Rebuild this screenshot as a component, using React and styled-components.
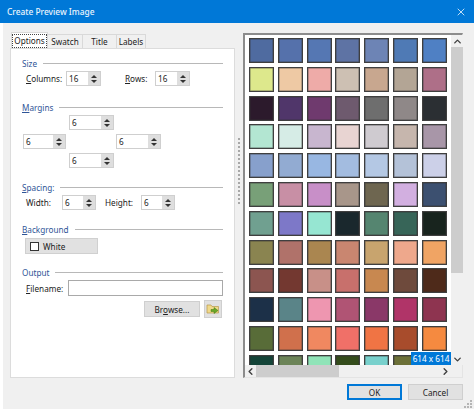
import styled, { createGlobalStyle } from 'styled-components';
import { ChevronUp, ChevronDown, ChevronLeft, ChevronRight, X } from 'lucide-react';

const GlobalStyle = createGlobalStyle`
  html, body {
    margin: 0;
    padding: 0;
    background: #ffffff;
  }
  * {
    box-sizing: border-box;
  }
`;

const Dialog = styled.div`
  width: 474px;
  height: 411px;
  display: flex;
  flex-direction: column;
  overflow: hidden;
  font-family: "Noto Sans", "Open Sans", sans-serif;
  font-size: 8.2px;
  color: #222222;
  background: #ffffff;
`;

const TitleBar = styled.header`
  flex: none;
  height: 23px;
  padding: 0 7px;
  display: flex;
  align-items: center;
  justify-content: space-between;
  background: #0078d7;
  color: #eaf4fc;
  font-size: 8.4px;
  font-weight: 500;
`;

const Body = styled.div`
  height: 386px;
  margin-left: 3px;
  padding: 10px 11px 0 7px;
  display: flex;
  flex-direction: column;
  background: #f0f0f0;
`;

const Content = styled.div`
  height: 345px;
  display: flex;
`;

const LeftPane = styled.div`
  width: 225px;
  display: flex;
  flex-direction: column;
`;

const Tabs = styled.div`
  flex: none;
  height: 15px;
  padding-left: 2px;
  display: flex;
  align-items: flex-end;
`;

const Tab = styled.div`
  width: ${(p) => p.$w}px;
  height: ${(p) => (p.$active ? 16 : 14)}px;
  display: flex;
  align-items: center;
  justify-content: center;
  background: ${(p) => (p.$active ? '#ffffff' : '#f0f0f0')};
  border: 1px solid #d9d9d9;
  border-bottom: none;
  margin-left: -1px;
  position: relative;
  z-index: ${(p) => (p.$active ? 1 : 0)};
`;

const FocusText = styled.span`
  padding: 0 1px;
  line-height: 12px;
  outline: 1px dotted #444444;
`;

const Panel = styled.div`
  flex: 1;
  padding: 7px 11px 0 11px;
  background: #ffffff;
  border: 1px solid #dcdcdc;
  display: flex;
  flex-direction: column;
`;

const Section = styled.section`
  margin-bottom: ${(p) => p.$gap}px;
  display: flex;
  flex-direction: column;
`;

const Legend = styled.div`
  height: 14px;
  margin-bottom: ${(p) => p.$gap ?? 1}px;
  display: flex;
  align-items: center;
  gap: 6px;
  color: #2f5597;
  &::after {
    content: '';
    flex: 1;
    height: 1px;
    background: #b8b8b8;
  }
`;

const Key = styled.span`
  text-decoration: underline;
`;

const FieldRow = styled.div`
  padding-left: 4px;
  display: flex;
  align-items: center;
`;

const Label = styled.label`
  width: ${(p) => p.$w}px;
  padding-left: ${(p) => p.$indent ?? 0}px;
  flex: none;
`;

const SpinBox = styled.div`
  width: ${(p) => p.$w}px;
  height: 15px;
  display: flex;
  justify-content: space-between;
  background: #ffffff;
  border: 1px solid #cfcfcf;
  line-height: 13px;
  padding-left: 2px;
`;

const SpinButtons = styled.div`
  width: 12px;
  display: flex;
  flex-direction: column;
  justify-content: center;
  align-items: center;
  gap: 2px;
  background: #dedede;
`;

const Arrow = styled.span`
  width: 0;
  height: 0;
  border-left: 3px solid transparent;
  border-right: 3px solid transparent;
  ${(p) => (p.$down ? 'border-top: 3px solid #333333;' : 'border-bottom: 3px solid #333333;')}
`;

const MarginsGrid = styled.div`
  padding-left: 1px;
  display: grid;
  grid-template-columns: 46px 47px 45px;
  row-gap: 4px;
  justify-items: start;
`;

const ColorButton = styled.div`
  width: 73px;
  height: 16px;
  margin-left: 3px;
  padding-left: 4px;
  display: flex;
  align-items: center;
  gap: 4px;
  background: #e1e1e1;
  border: 1px solid #d0d0d0;
`;

const ColorChip = styled.span`
  width: 9px;
  height: 9px;
  background: ${(p) => p.$color};
  border: 1px solid #333333;
`;

const TextInput = styled.div`
  width: 156px;
  height: 16px;
  background: #ffffff;
  border: 1px solid #a9a9a9;
`;

const ButtonRow = styled.div`
  margin-top: 4px;
  padding-right: 1px;
  display: flex;
  justify-content: flex-end;
  align-items: center;
  gap: 4px;
`;

const Button = styled.div`
  width: ${(p) => p.$w}px;
  height: ${(p) => p.$h ?? 16}px;
  display: flex;
  align-items: center;
  justify-content: center;
  background: #e1e1e1;
  border: ${(p) => (p.$primary ? '2px solid #0078d7' : '1px solid #cfcfcf')};
`;

const Splitter = styled.div`
  width: 8px;
  flex: none;
  display: flex;
  align-items: center;
  justify-content: center;
  padding-bottom: 69px;
  &::before {
    content: '';
    height: 66px;
    border-left: 2px dotted #a8a8a8;
  }
`;

const PreviewFrame = styled.div`
  width: 220px;
  display: grid;
  grid-template-columns: 206px 12px;
  grid-template-rows: 1fr 12px;
  border-top: 2px solid #8c8c8c;
  border-left: 2px solid #8c8c8c;
  border-right: 1px solid #e4e4e4;
  border-bottom: 1px solid #e4e4e4;
`;

const SwatchView = styled.div`
  position: relative;
  overflow: hidden;
  background: #ffffff;
  padding: 3px 0 0 4px;
`;

const SwatchGrid = styled.div`
  display: grid;
  grid-template-columns: repeat(7, 25px);
  grid-auto-rows: 25px;
  gap: 3.8px;
`;

const Swatch = styled.div`
  background: ${(p) => p.$color};
  border: 1px solid #3f3f3f;
  box-shadow: inset 0 0 0 0.5px rgba(50, 50, 50, 0.6);
`;

const SizeBadge = styled.div`
  position: absolute;
  right: 0;
  bottom: 0;
  width: 40px;
  height: 13px;
  display: flex;
  align-items: center;
  justify-content: center;
  background: #0078d7;
  color: #ffffff;
  font-size: 8.2px;
  line-height: 13px;
  white-space: nowrap;
`;

const VScroll = styled.div`
  display: flex;
  flex-direction: column;
  background: #f0f0f0;
`;

const HScroll = styled.div`
  display: flex;
  background: #f0f0f0;
`;

const ScrollEnd = styled.div`
  flex: none;
  ${(p) => (p.$horizontal ? 'width: 11px;' : 'height: 12px;')}
  display: flex;
  align-items: center;
  justify-content: center;
  color: #404040;
`;

const Thumb = styled.div`
  flex: none;
  ${(p) => (p.$horizontal ? `width: ${p.$size}px;` : `height: ${p.$size}px;`)}
  background: #cdcdcd;
`;

const Spacer = styled.div`
  flex: 1;
`;

const Footer = styled.footer`
  margin-top: 6px;
  display: flex;
  justify-content: flex-end;
  align-items: flex-end;
  gap: 6px;
  height: 16px;
`;

const Grip = styled.svg`
  position: absolute;
  right: 1px;
  bottom: 2px;
`;

const Spin = ({ value, w }) => (
  <SpinBox $w={w}>
    {value}
    <SpinButtons>
      <Arrow />
      <Arrow $down />
    </SpinButtons>
  </SpinBox>
);

const FolderIcon = () => (
  <svg width="14" height="14" viewBox="0 0 14 14">
    <path d="M1 3h4l1 1.5h6.5V11H1z" fill="#f0d98a" stroke="#b89a4a" strokeWidth="0.7" />
    <path d="M5 7.5h3V5.5l4 3-4 3v-2H5z" fill="#6aa828" stroke="#3f7a12" strokeWidth="0.5" />
  </svg>
);

const swatches = [
  '#4f6ba0', '#5571ab', '#5577b3', '#5e73a4', '#6d84b5', '#4f7ab5', '#4f80c4',
  '#dde88c', '#eec9a4', '#eeaba8', '#cdc0b3', '#c8a78f', '#b3a595', '#ae6f88',
  '#2c1a2c', '#50366a', '#6f3a6e', '#6e5a6e', '#6e6e6e', '#8f8888', '#2b2f33',
  '#b3e6d2', '#d6ece6', '#c8b6cf', '#e8d4d2', '#cfcbd0', '#c6b6ad', '#a896a8',
  '#87a0cc', '#92abd2', '#98b7e2', '#a3bce0', '#b4c8e4', '#b4c2d8', '#ccd0e8',
  '#78a078', '#c88fa5', '#c88fc8', '#a8968a', '#6e6650', '#d2afe0', '#3c5070',
  '#70a090', '#7d78c8', '#96e6d2', '#1a282d', '#558570', '#376558', '#18241e',
  '#8a8450', '#b0726a', '#aa8650', '#c98670', '#c8a46e', '#eea88c', '#f0a464',
  '#8c5550', '#733830', '#c89088', '#c8706c', '#c88850', '#6e4a3c', '#4e2a1a',
  '#1c3048', '#5a8488', '#ee96b0', '#b05474', '#8a3868', '#b03468', '#8e3450',
  '#586c38', '#d0704c', '#f08860', '#f07068', '#f07444', '#a84c2c', '#f58a40',
  '#144438', '#6c8458', '#90e4b8', '#344c1c', '#78d0cc', '#6c7038', '#8a6a3c',
];

const tabs = [
  { label: 'Swatch', w: 36 },
  { label: 'Title', w: 35 },
  { label: 'Labels', w: 30 },
];

export default function App() {
  return (
    <>
      <GlobalStyle />
      <Dialog>
        <TitleBar>
          Create Preview Image
          <X size={12} strokeWidth={1.5} color="#ffffff" />
        </TitleBar>
        <Body>
          <Content>
            <LeftPane>
              <Tabs>
                <Tab $active $w={37}>
                  <FocusText>Options</FocusText>
                </Tab>
                {tabs.map((t) => (
                  <Tab key={t.label} $w={t.w}>
                    {t.label}
                  </Tab>
                ))}
              </Tabs>
              <Panel>
                <Section $gap={14}>
                  <Legend>Size</Legend>
                  <FieldRow>
                    <Label $w={40}>
                      <Key>C</Key>olumns:
                    </Label>
                    <Spin value="16" w={35} />
                    <Label $w={54} $indent={24}>
                      <Key>R</Key>ows:
                    </Label>
                    <Spin value="16" w={35} />
                  </FieldRow>
                </Section>
                <Section $gap={12}>
                  <Legend>
                    <span>
                      <Key>M</Key>argins
                    </span>
                  </Legend>
                  <MarginsGrid>
                    <span />
                    <Spin value="6" w={45} />
                    <span />
                    <Spin value="6" w={43} />
                    <span />
                    <Spin value="6" w={45} />
                    <span />
                    <Spin value="6" w={45} />
                    <span />
                  </MarginsGrid>
                </Section>
                <Section $gap={12}>
                  <Legend>
                    <span>
                      <Key>S</Key>pacing:
                    </span>
                  </Legend>
                  <FieldRow>
                    <Label $w={36}>Width:</Label>
                    <Spin value="6" w={34} />
                    <Label $w={45} $indent={9}>
                      Height:
                    </Label>
                    <Spin value="6" w={34} />
                  </FieldRow>
                </Section>
                <Section $gap={11}>
                  <Legend $gap={2}>
                    <span>
                      <Key>B</Key>ackground
                    </span>
                  </Legend>
                  <ColorButton>
                    <ColorChip $color="#ffffff" />
                    White
                  </ColorButton>
                </Section>
                <Section $gap={0}>
                  <Legend>Output</Legend>
                  <FieldRow>
                    <Label $w={42}>
                      <Key>F</Key>ilename:
                    </Label>
                    <TextInput />
                  </FieldRow>
                  <ButtonRow>
                    <Button $w={56}>
                      <span>
                        Br<Key>o</Key>wse...
                      </span>
                    </Button>
                    <Button $w={18} $h={18}>
                      <FolderIcon />
                    </Button>
                  </ButtonRow>
                </Section>
              </Panel>
            </LeftPane>
            <Splitter />
            <PreviewFrame>
              <SwatchView>
                <SwatchGrid>
                  {swatches.map((c, i) => (
                    <Swatch key={i} $color={c} />
                  ))}
                </SwatchGrid>
                <SizeBadge>614 x 614</SizeBadge>
              </SwatchView>
              <VScroll>
                <ScrollEnd>
                  <ChevronUp size={11} strokeWidth={3} />
                </ScrollEnd>
                <Thumb $size={226} />
                <Spacer />
                <ScrollEnd>
                  <ChevronDown size={11} strokeWidth={3} />
                </ScrollEnd>
              </VScroll>
              <HScroll>
                <ScrollEnd $horizontal>
                  <ChevronLeft size={11} strokeWidth={3} />
                </ScrollEnd>
                <Thumb $horizontal $size={83} />
                <Spacer />
                <ScrollEnd $horizontal>
                  <ChevronRight size={11} strokeWidth={3} />
                </ScrollEnd>
              </HScroll>
              <Spacer />
            </PreviewFrame>
          </Content>
          <Footer>
            <Button $w={55} $primary>
              OK
            </Button>
            <Button $w={55}>Cancel</Button>
          </Footer>
          <Grip width="10" height="10" viewBox="0 0 10 10">
            <g fill="#b5b5b5">
              <rect x="7" y="1" width="2" height="2" />
              <rect x="4" y="4" width="2" height="2" />
              <rect x="7" y="4" width="2" height="2" />
              <rect x="1" y="7" width="2" height="2" />
              <rect x="4" y="7" width="2" height="2" />
              <rect x="7" y="7" width="2" height="2" />
            </g>
          </Grip>
        </Body>
      </Dialog>
    </>
  );
}
